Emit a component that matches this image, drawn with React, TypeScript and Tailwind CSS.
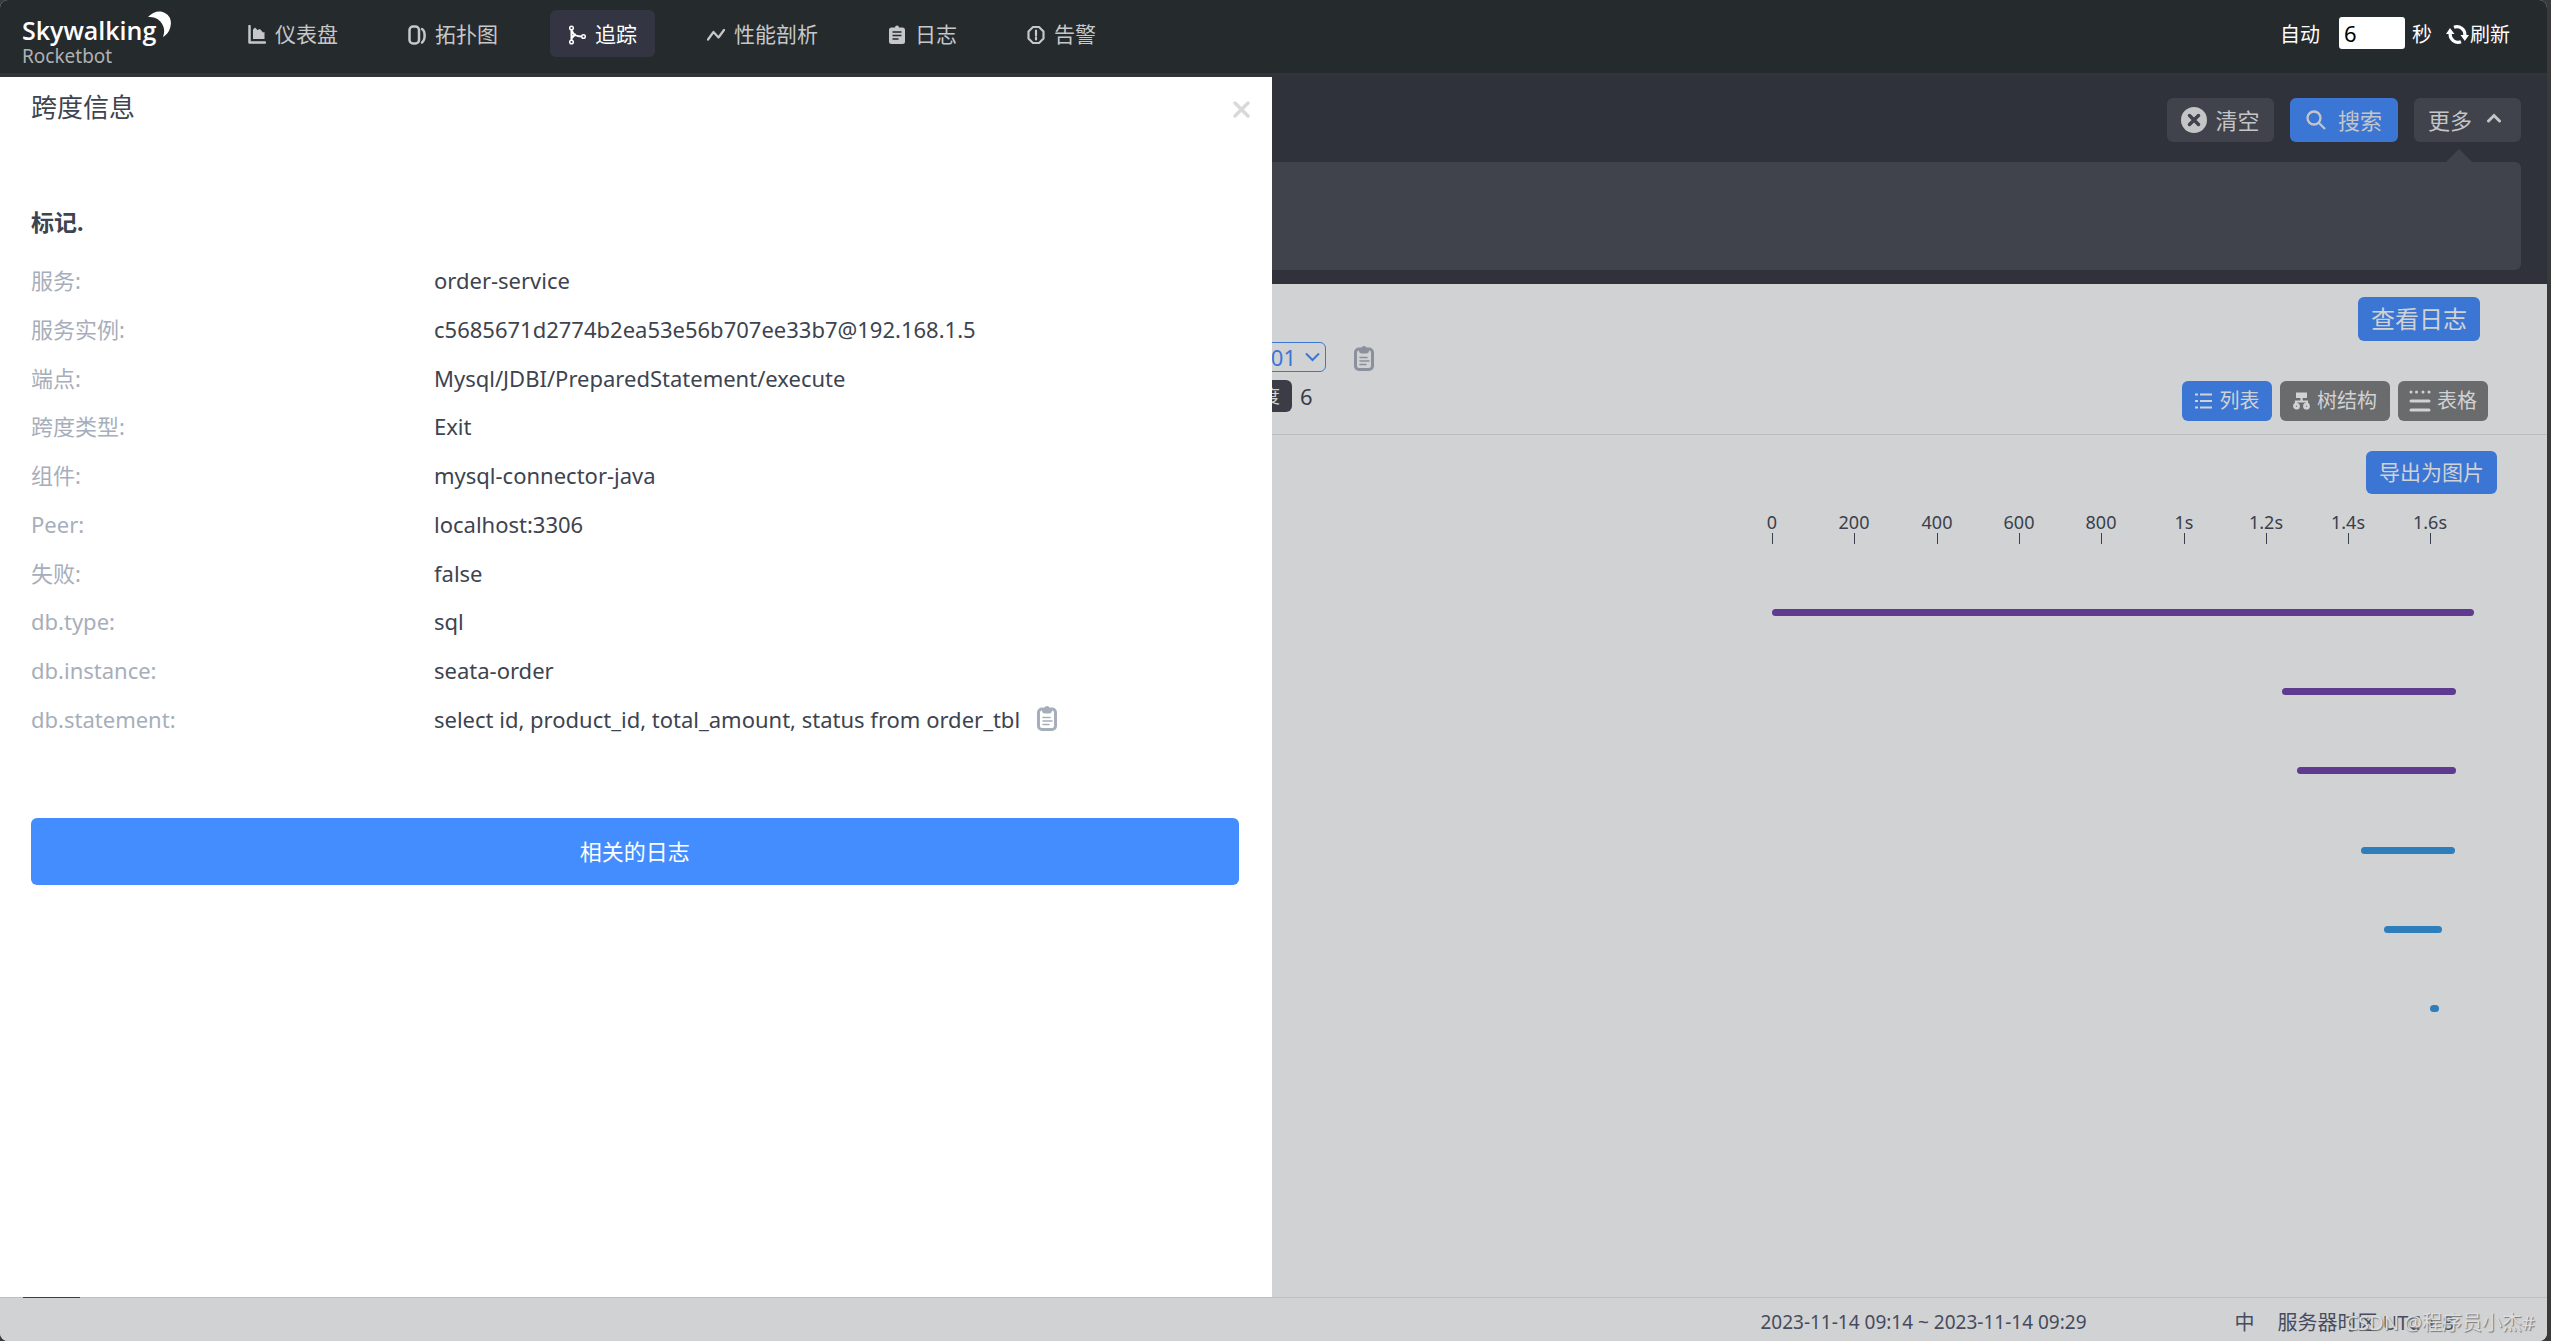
import type { ReactNode } from "react";

const spanInfo: { label: string; value: string; copy?: boolean }[] = [
  { label: "服务:", value: "order-service" },
  { label: "服务实例:", value: "c5685671d2774b2ea53e56b707ee33b7@192.168.1.5" },
  { label: "端点:", value: "Mysql/JDBI/PreparedStatement/execute" },
  { label: "跨度类型:", value: "Exit" },
  { label: "组件:", value: "mysql-connector-java" },
  { label: "Peer:", value: "localhost:3306" },
  { label: "失败:", value: "false" },
  { label: "db.type:", value: "sql" },
  { label: "db.instance:", value: "seata-order" },
  {
    label: "db.statement:",
    value: "select id, product_id, total_amount, status from order_tbl",
    copy: true,
  },
];

const ticks = ["0", "200", "400", "600", "800", "1s", "1.2s", "1.4s", "1.6s"];

const bars = [
  { x: 25, w: 702, color: "#5f3a91" },
  { x: 535, w: 174, color: "#5f3a91" },
  { x: 550, w: 159, color: "#5f3a91" },
  { x: 614, w: 94, color: "#2e7ebc" },
  { x: 637, w: 58, color: "#2e7ebc" },
  { x: 683, w: 9, color: "#2e7ebc" },
];

function ClipboardIcon() {
  return (
    <svg width="20" height="26" viewBox="0 0 20 26" fill="none">
      <rect x="1.5" y="3" width="17" height="20.5" rx="3.5" stroke="currentColor" strokeWidth="3" />
      <path d="M5 3.5V2.5h2.5a2.5 2.5 0 0 1 5 0H15v2a3 3 0 0 1-3 3H8a3 3 0 0 1-3-3z" fill="currentColor" />
      <path d="M6 11.5h7M6 15h9M6 18.5h6" stroke="currentColor" strokeWidth="1.6" strokeLinecap="round" />
    </svg>
  );
}

function Logo() {
  return (
    <a href="#" className="relative flex w-[207px] shrink-0 flex-col pl-[22px] pt-[14px]">
      <span className="font-['Open_Sans','Noto_Sans',sans-serif] text-[25px] leading-[32px] font-semibold text-white">
        Skywalking
      </span>
      <span className="text-[19px] leading-[20px] text-[#aeb1b4]">Rocketbot</span>
      <svg width="24" height="32" viewBox="0 0 24 32" className="absolute left-[148px] top-[11px]">
        <path
          d="M0 6C4 1.500 10-.5 14.500 1c6 2 9 6.500 8.300 12.500-.5 5.500-3.500 10-7.800 12.500 1.500-4.500 1.800-8-.5-12.200C12 8.200 6.500 5.300 0 6z"
          fill="#fff"
        />
      </svg>
    </a>
  );
}

function NavItem({ label, icon, active }: { label: string; icon: ReactNode; active?: boolean }) {
  return (
    <a
      href="#"
      className={
        active
          ? "flex h-[47px] items-center gap-[9px] rounded-md bg-[#333642] px-[18px] pt-[2px] text-[21px] text-white"
          : "flex h-[47px] items-center gap-[9px] rounded-md px-[18px] pt-[2px] text-[21px] text-[#c5c7c8]"
      }
    >
      <svg width="18" height="20" viewBox="0 0 18 20" fill="none" stroke="currentColor">
        {icon}
      </svg>
      {label}
    </a>
  );
}

function Header() {
  return (
    <header className="flex h-[77px] border-b-4 border-[#31353b] bg-[#252a2d] pr-[37px]">
      <Logo />
      <nav className="flex gap-[34px] pl-[23px] pt-[10px]">
        <NavItem
          label="仪表盘"
          icon={
            <>
              <path d="M1.500 1v16.500H17" strokeWidth="2.500" strokeLinecap="round" strokeLinejoin="round" />
              <path d="M5 14V4.500l2-2 2.500 2.500L12 4l3 3.500 1.500-.5v7z" fill="currentColor" stroke="none" />
            </>
          }
        />
        <NavItem
          label="拓扑图"
          icon={
            <>
              <rect x="1.500" y="1.500" width="9.500" height="17" rx="3.500" strokeWidth="2.500" />
              <path d="M14 4c3.500 2 3.500 11 0 13.500" strokeWidth="2.500" strokeLinecap="round" />
            </>
          }
        />
        <NavItem
          active
          label="追踪"
          icon={
            <>
              <circle cx="3.500" cy="3" r="1.800" strokeWidth="1.500" />
              <circle cx="3.500" cy="17" r="1.800" strokeWidth="1.500" />
              <circle cx="15.500" cy="11.500" r="1.800" strokeWidth="1.500" />
              <path d="M3.500 5v10M4 6c1.500 4 5 5.500 9.500 5.500M4 13c1-2 2.500-3 4-3.500" strokeWidth="2" />
            </>
          }
        />
        <NavItem
          label="性能剖析"
          icon={<path d="M1 14.500 6.500 7l5 5.500L17 5" strokeWidth="2.200" strokeLinecap="round" strokeLinejoin="round" />}
        />
        <NavItem
          label="日志"
          icon={
            <>
              <path
                d="M3.500 2.500H7a2 2 0 0 1 4 0h3.500A2.500 2.500 0 0 1 17 5v11.500a2.500 2.500 0 0 1-2.500 2.500h-11A2.500 2.500 0 0 1 1 16.500V5a2.500 2.500 0 0 1 2.500-2.500z"
                fill="currentColor"
                stroke="none"
              />
              <path d="M4.500 7h9M4.500 10.500h9M4.500 14h6" stroke="#252a2d" strokeWidth="1.600" />
            </>
          }
        />
        <NavItem
          label="告警"
          icon={
            <>
              <path d="M6 2h6l4.500 4.500v7L12 18H6l-4.500-4.500v-7z" strokeWidth="2.200" strokeLinejoin="round" />
              <path d="M9 5.500v5M9 12.500v2" strokeWidth="2.200" strokeLinecap="round" />
            </>
          }
        />
      </nav>
      <div className="ml-auto flex h-[66px] items-center text-[20px] text-white">
        <label htmlFor="interval" className="pt-[3px] pr-[19px]">
          自动
        </label>
        <input
          id="interval"
          defaultValue="6"
          className="h-8 w-[66px] rounded-[3px] bg-white px-[5px] text-[22px] text-black"
        />
        <span className="pt-[3px] pl-[7px]">秒</span>
        <button className="ml-[14px] flex items-center gap-px pt-[3px]">
          <svg width="23" height="21" viewBox="0 0 23 21" fill="none" stroke="currentColor" strokeWidth="3.200">
            <path d="M8 3.200a8 8 0 0 1 10.800 8.300M15 17.800A8 8 0 0 1 4.200 9.500" />
            <path d="M0 10 4 4l4.500 6zM14.500 11 23 11l-4.200 6z" fill="currentColor" stroke="none" />
          </svg>
          刷新
        </button>
      </div>
    </header>
  );
}

function Toolbar() {
  return (
    <section className="bg-[#2f323a] px-[26px] pt-[21px] pb-[14px]">
      <div className="flex justify-end gap-4 text-[22px] text-[#c4c5c7]">
        <button className="flex h-11 w-[107px] items-center justify-center gap-2 rounded-md bg-[#40434b]">
          <svg width="26" height="26" viewBox="0 0 26 26">
            <circle cx="13" cy="13" r="13" fill="#c4c5c7" />
            <path d="M8.500 8.500l9 9M17.500 8.500l-9 9" stroke="#40434b" strokeWidth="3.500" strokeLinecap="round" />
          </svg>
          清空
        </button>
        <button className="flex h-11 w-[108px] items-center justify-center gap-3 rounded-md bg-[#3c76d5]">
          <svg width="20" height="20" viewBox="0 0 20 20" fill="none" stroke="currentColor" strokeWidth="2.300">
            <circle cx="8" cy="8" r="6.500" />
            <path d="M12.500 12.500 19 19" />
          </svg>
          搜索
        </button>
        <button className="flex h-11 w-[107px] items-center gap-[15px] rounded-md bg-[#40434b] pl-[14px]">
          更多
          <svg width="14" height="14" viewBox="0 0 14 14" fill="none" stroke="currentColor" strokeWidth="3" strokeLinecap="round">
            <path d="M1.500 8 7 2.500 12.500 8" />
          </svg>
        </button>
      </div>
      <div className="flex justify-end pr-[49px] pt-[7px]">
        <svg width="26" height="13" viewBox="0 0 26 13">
          <path d="M0 13 13 0l13 13z" fill="#40434b" />
        </svg>
      </div>
      <div className="h-[108px] rounded-md bg-[#40434b]" />
    </section>
  );
}

function TraceHead() {
  return (
    <section className="flex justify-between border-b border-[#bcbdbf] pr-[59px] pb-[13px]">
      <div className="ml-[826px] flex flex-col gap-[8px] pt-[58px] text-[#3a3d46]">
        <div className="flex items-center gap-7">
          <div className="relative flex items-center text-[#3c76d5]">
            <select
              aria-label="Trace ID"
              className="h-[30px] w-[500px] appearance-none rounded-md border border-[#3c76d5] pr-[29px] text-[22px] leading-[28px] [text-align-last:right]"
            >
              <option>0001</option>
            </select>
            <svg
              width="15"
              height="10"
              viewBox="0 0 15 10"
              fill="none"
              stroke="currentColor"
              strokeWidth="2"
              className="pointer-events-none absolute right-[6px]"
            >
              <path d="M1 1.500 7.500 8 14 1.500" />
            </svg>
          </div>
          <button aria-label="copy" className="pt-1 text-[#8b919c]">
            <ClipboardIcon />
          </button>
        </div>
        <div className="flex items-center gap-2 pl-[406px] text-[22px] leading-8">
          <span className="flex h-8 items-center rounded-md bg-[#3a3d46] px-3 text-[18px] text-[#d1d2d4]">跨度</span>
          6
        </div>
      </div>
      <div className="flex flex-col items-end gap-10 pt-[13px]">
        <button className="mr-2 flex h-11 items-center rounded-md bg-[#3c76d5] px-[13px] text-[24px] text-[#d1d2d4]">
          查看日志
        </button>
        <div className="flex gap-2 text-[20px] text-[#d1d2d4]">
          <button className="flex h-10 w-[90px] items-center justify-center gap-2 rounded-md bg-[#3c76d5]">
            <svg width="17" height="18" viewBox="0 0 17 18" stroke="currentColor" strokeWidth="2.200">
              <path d="M0 2.500h3M5 2.500h12M0 9h3M5 9h12M0 15.500h3M5 15.500h12" />
            </svg>
            列表
          </button>
          <button className="flex h-10 w-[110px] items-center justify-center gap-[7px] rounded-md bg-[#696b6d]">
            <svg width="17" height="18" viewBox="0 0 17 18" fill="none" stroke="currentColor" strokeWidth="2.800">
              <path d="M3 .5h11v5.500H3z" fill="currentColor" stroke="none" />
              <path d="M8.500 5v4M3 13V9.500h11V13" strokeWidth="2.200" />
              <circle cx="3.500" cy="14.200" r="2" />
              <circle cx="13.500" cy="14.200" r="2" />
            </svg>
            树结构
          </button>
          <button className="flex h-10 w-[90px] items-center justify-center gap-1.5 rounded-md bg-[#696b6d]">
            <svg width="22" height="22" viewBox="0 0 22 22" stroke="currentColor" strokeLinecap="round" strokeWidth="3">
              <path d="M2 2h0M7.500 2h0M14 2h0M20 2h0M2 11h18M2 20h18" />
            </svg>
            表格
          </button>
        </div>
      </div>
    </section>
  );
}

function TraceChart() {
  return (
    <section className="flex flex-1 flex-col items-end pt-4 pr-[40px]">
      <button className="mr-[10px] flex h-[43px] items-center rounded-md bg-[#3c76d5] px-[13px] text-[21px] text-[#d1d2d4]">
        导出为图片
      </button>
      <svg width="760" height="540" viewBox="0 0 760 540" className="mt-[6px]">
        {ticks.map((t, i) => (
          <g key={t} fill="#3a404b">
            <text x={25 + Math.round(i * 82.3)} y="29" textAnchor="middle" fontSize="18">
              {t}
            </text>
            <rect x={25 + Math.round(i * 82.3)} y="33" width="1" height="11" />
          </g>
        ))}
        {bars.map((b, i) => (
          <rect key={i} x={b.x} y={109 + Math.round(i * 79.2)} width={b.w} height="7" rx="3.5" fill={b.color} />
        ))}
      </svg>
    </section>
  );
}

function Footer() {
  return (
    <footer className="relative h-11 border-t border-[#bfc0c3] bg-[#d1d2d4] text-[#464c5d]">
      <div className="absolute -top-px left-[23px] h-px w-[57px] bg-[#3a3d46]" />
      <div className="flex h-full items-center justify-end pt-[6px] pr-[93px] text-[20px]">
        <span className="text-[19px]">2023-11-14 09:14 ~ 2023-11-14 09:29</span>
        <button className="ml-[148px]">中</button>
        <span className="ml-[23px]">服务器时区 UTC + 8</span>
      </div>
      <span className="absolute right-[12px] bottom-[4px] text-[20px] leading-[28px] text-[#dcdddf] [text-shadow:1px_1px_1px_#777]">
        CSDN @程序员小杰#
      </span>
    </footer>
  );
}

function SpanDrawer() {
  return (
    <aside
      role="dialog"
      aria-label="跨度信息"
      className="absolute top-[77px] bottom-11 left-0 w-[calc(50%-2px)] bg-white pr-[33px] pl-[31px] text-[#3d444f]"
    >
      <div className="flex h-[60px] items-center justify-between">
        <h2 className="text-[26px]">跨度信息</h2>
        <button aria-label="close" className="-mr-[11px] pt-[5px] text-[#d9d9d9]">
          <svg width="17" height="17" viewBox="0 0 17 17" stroke="currentColor" strokeWidth="3.500" strokeLinecap="round">
            <path d="M2 2l13 13M15 2 2 15" />
          </svg>
        </button>
      </div>
      <h3 className="mt-[68px] text-[23px] leading-[34px] font-bold">标记.</h3>
      <dl className="mt-[17px] grid min-h-[487px] auto-rows-fr text-[22px] leading-8">
        {spanInfo.map((row) => (
          <div key={row.label} className="flex items-center">
            <dt className="w-[403px] text-[#a7aebb]">{row.label}</dt>
            <dd className="flex items-center gap-[17px]">
              {row.value}
              {row.copy && (
                <button aria-label="copy" className="text-[#a7aebb]">
                  <ClipboardIcon />
                </button>
              )}
            </dd>
          </div>
        ))}
      </dl>
      <button className="mt-[75px] h-[67px] w-full rounded-md bg-[#448dfe] text-[22px] text-white">相关的日志</button>
    </aside>
  );
}

export default function App() {
  return (
    <div className="min-h-screen bg-[#3a3a3a] pr-1 font-['Noto_Sans','Noto_Sans_CJK_SC',sans-serif]">
      <div className="relative flex min-h-screen flex-col overflow-hidden rounded-lg bg-[#d1d2d4]">
        <Header />
        <Toolbar />
        <TraceHead />
        <TraceChart />
        <Footer />
        <SpanDrawer />
      </div>
    </div>
  );
}
